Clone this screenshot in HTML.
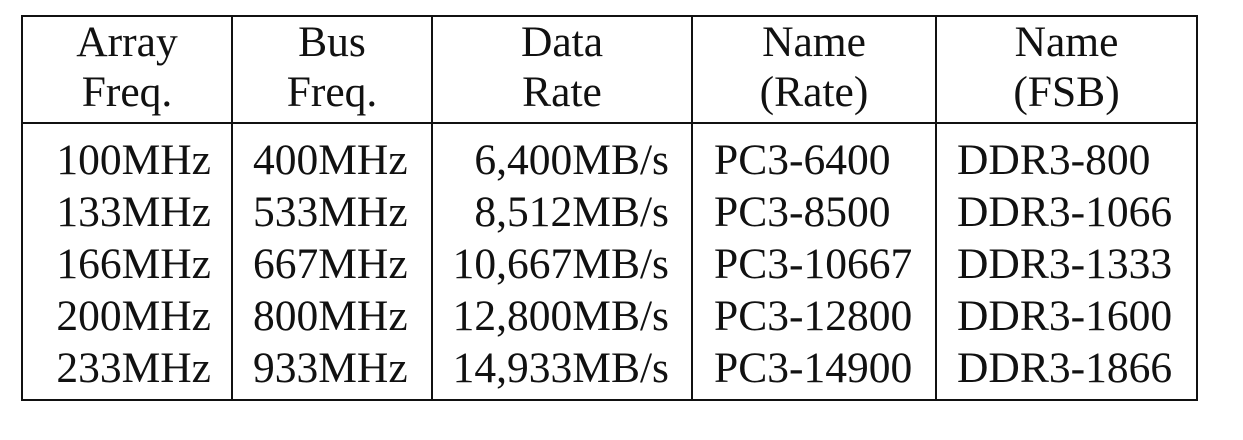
<!DOCTYPE html>
<html><head><style>
body{margin:0;width:1243px;height:440px;background:#fff;position:relative;overflow:hidden;font-family:"Liberation Serif",serif;font-size:43.5px;color:#111}
.l{position:absolute;background:#111}
.t{position:absolute;white-space:nowrap;line-height:1}
.c{text-align:center}.r{text-align:right}
</style></head><body>
<div class="l" style="left:21px;top:15px;width:1177px;height:2px"></div>
<div class="l" style="left:21px;top:399px;width:1177px;height:2px"></div>
<div class="l" style="left:21px;top:122px;width:1177px;height:2px"></div>
<div class="l" style="left:21px;top:15px;width:2px;height:386px"></div>
<div class="l" style="left:1196px;top:15px;width:2px;height:386px"></div>
<div class="l" style="left:231px;top:15px;width:2px;height:386px"></div>
<div class="l" style="left:431px;top:15px;width:2px;height:386px"></div>
<div class="l" style="left:691px;top:15px;width:2px;height:386px"></div>
<div class="l" style="left:935px;top:15px;width:2px;height:386px"></div>

<div class="t c" style="left:23px;width:208px;top:21px">Array</div>
<div class="t c" style="left:23px;width:208px;top:71px">Freq.</div>
<div class="t c" style="left:233px;width:198px;top:21px">Bus</div>
<div class="t c" style="left:233px;width:198px;top:71px">Freq.</div>
<div class="t c" style="left:433px;width:258px;top:21px">Data</div>
<div class="t c" style="left:433px;width:258px;top:71px">Rate</div>
<div class="t c" style="left:693px;width:242px;top:21px">Name</div>
<div class="t c" style="left:693px;width:242px;top:71px">(Rate)</div>
<div class="t c" style="left:937px;width:259px;top:21px">Name</div>
<div class="t c" style="left:937px;width:259px;top:71px">(FSB)</div>

<div class="t r" style="right:1032px;top:134px;line-height:52px">100MHz<br>133MHz<br>166MHz<br>200MHz<br>233MHz</div>
<div class="t" style="left:253px;top:134px;line-height:52px">400MHz<br>533MHz<br>667MHz<br>800MHz<br>933MHz</div>
<div class="t r" style="right:574px;top:134px;line-height:52px">6,400MB/s<br>8,512MB/s<br>10,667MB/s<br>12,800MB/s<br>14,933MB/s</div>
<div class="t" style="left:714px;top:134px;line-height:52px">PC3-6400<br>PC3-8500<br>PC3-10667<br>PC3-12800<br>PC3-14900</div>
<div class="t" style="left:957px;top:134px;line-height:52px">DDR3-800<br>DDR3-1066<br>DDR3-1333<br>DDR3-1600<br>DDR3-1866</div>
</body></html>
